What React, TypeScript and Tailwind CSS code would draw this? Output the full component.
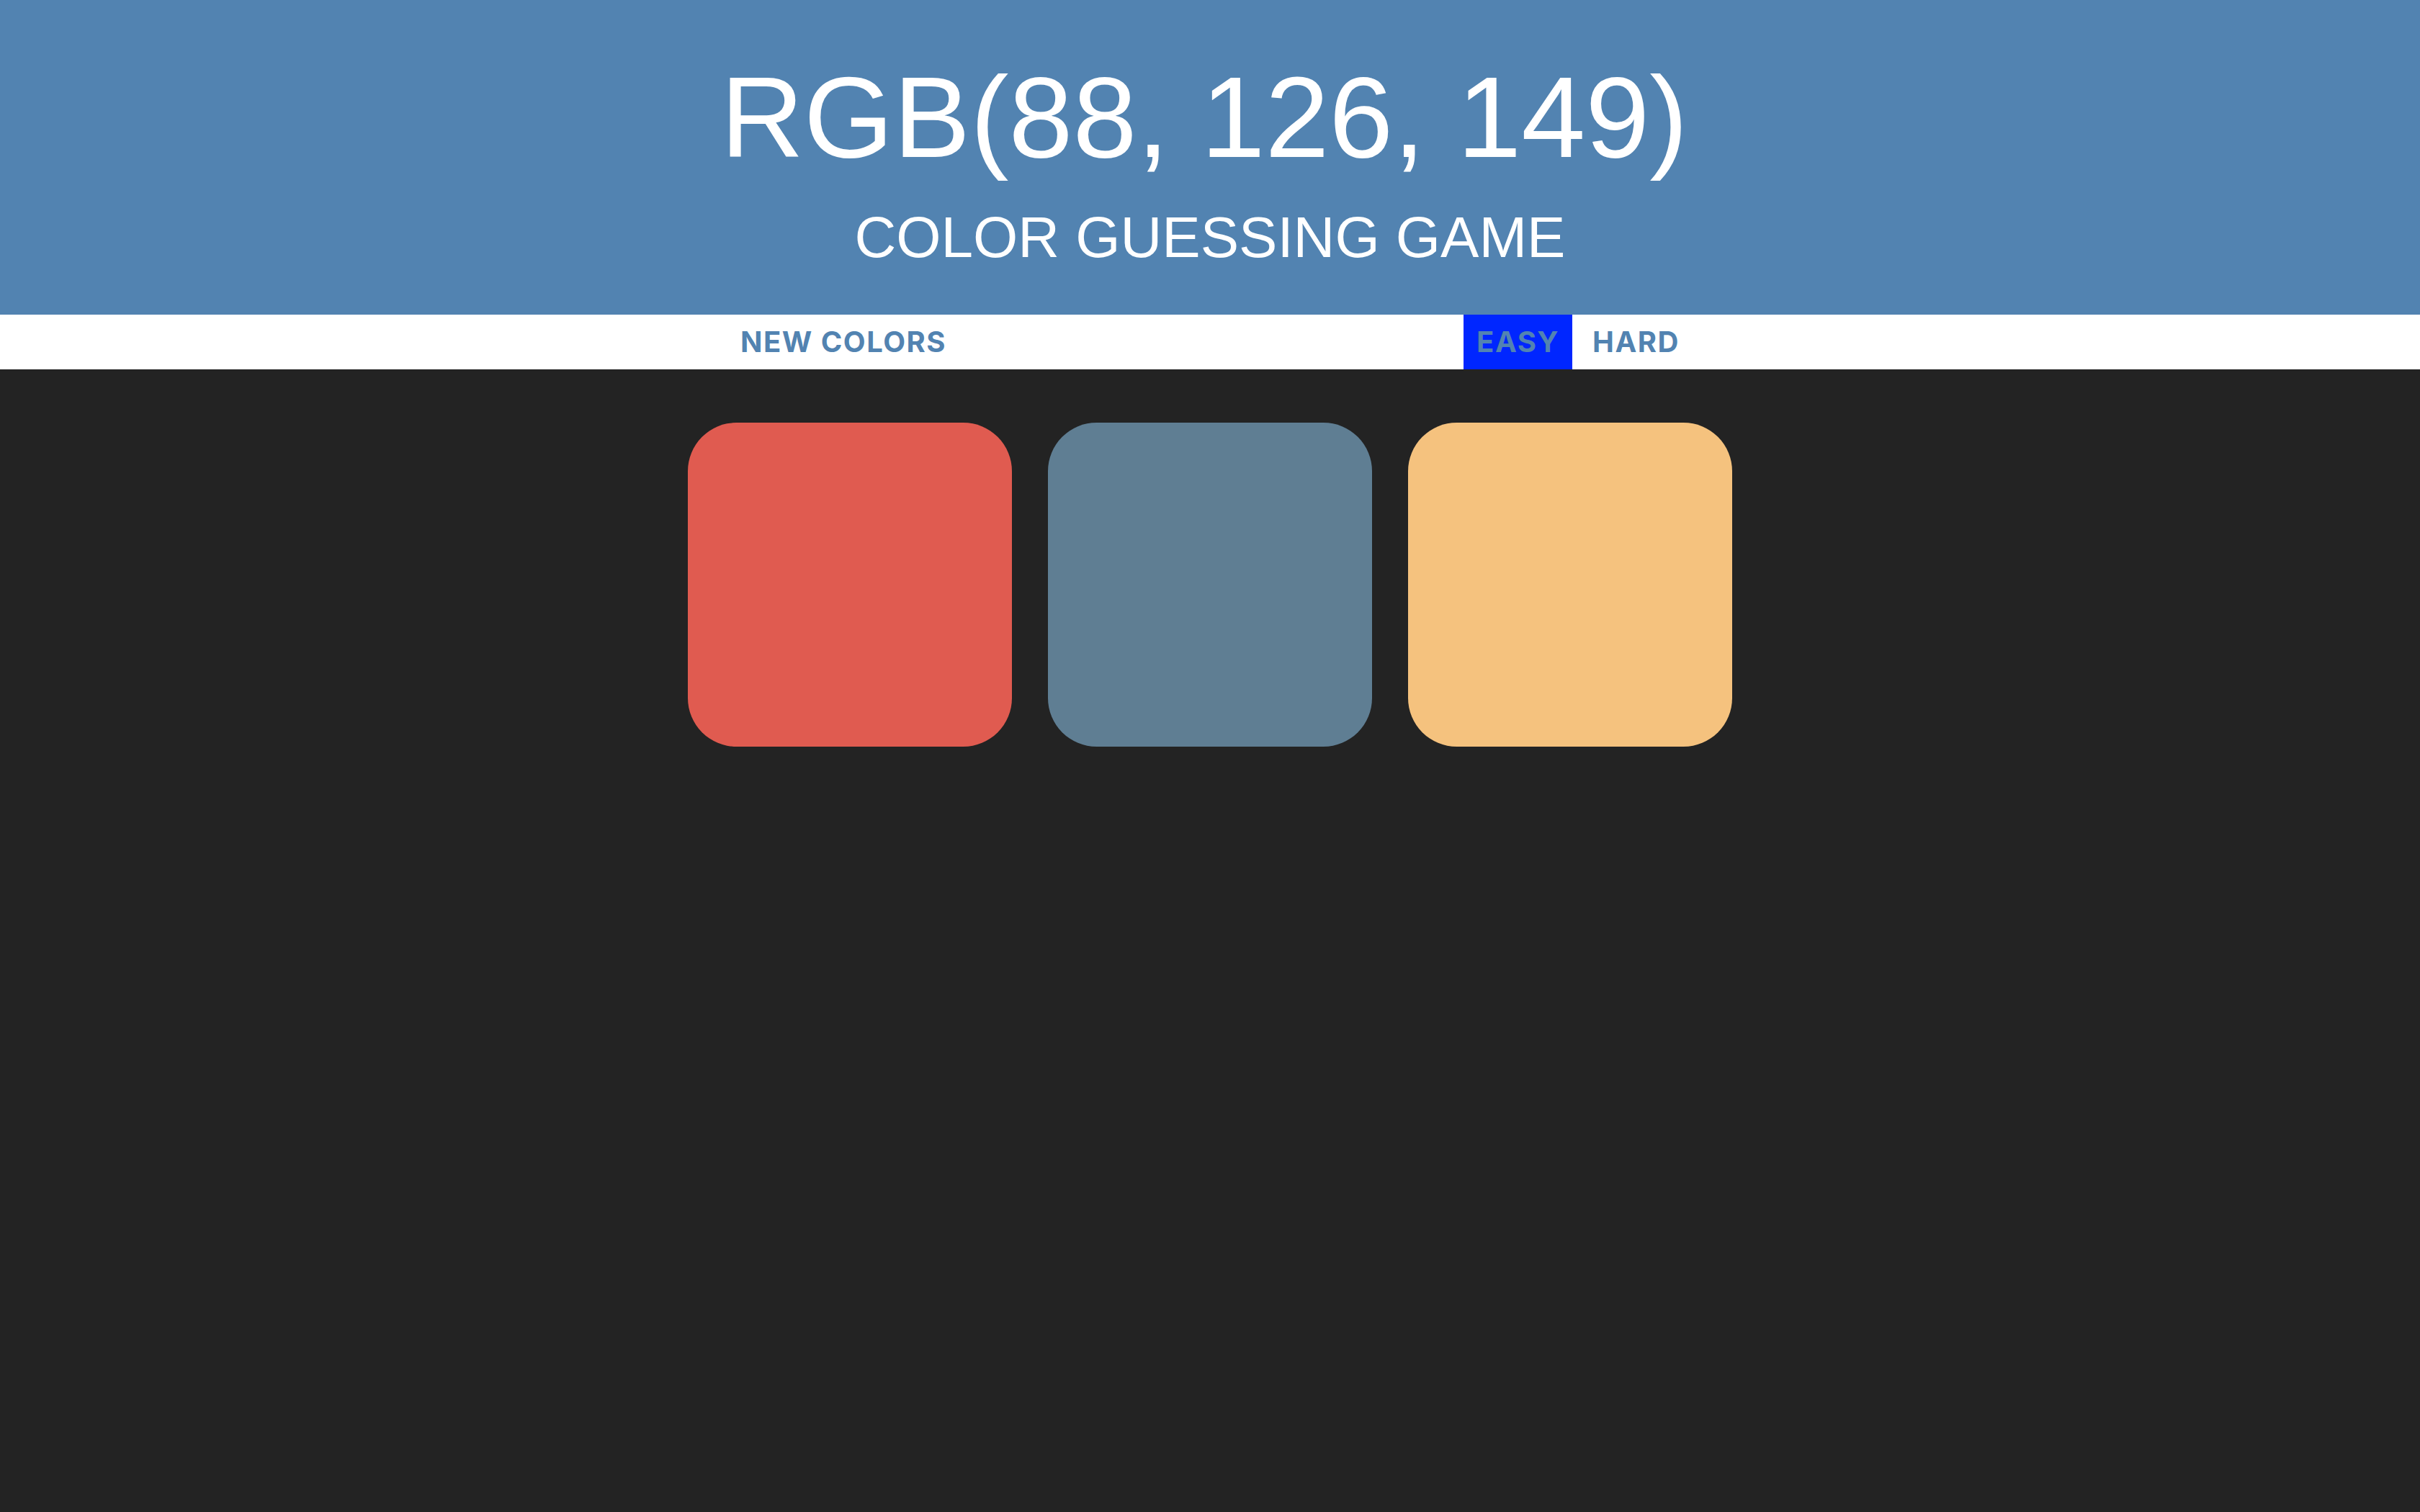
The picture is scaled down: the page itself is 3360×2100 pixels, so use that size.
const squares = ["#e05b50", "#5f7e93", "#f5c27e"];

function ModeButton({ label, active }: { label: string; active?: boolean }) {
  return (
    <button
      className={
        active
          ? "flex h-full items-center bg-[#0026ff] px-[18px] font-bold text-[#5283b1] text-[40px] uppercase tracking-[1.5px]"
          : "flex h-full items-center px-[18px] font-bold text-[#5283b1] text-[40px] uppercase tracking-[1.5px]"
      }
    >
      {label}
    </button>
  );
}

export default function App() {
  return (
    <div className="min-h-screen bg-[#232323]">
      <header className="bg-[#5283b1] pt-[83px] pb-[67px] text-center text-white font-['Liberation_Sans',Arial,sans-serif]">
        <h1 className="font-normal">
          <span className="block pr-[16px] text-[160px] leading-none">RGB(88, 126, 149)</span>
          <span className="mt-[47px] block text-[80px] leading-none">COLOR GUESSING GAME</span>
        </h1>
      </header>

      <nav className="flex h-[76px] justify-center bg-white font-['Inter',sans-serif]">
        <div className="flex w-[1340px] items-stretch justify-between">
          <ModeButton label="New Colors" />
          <div className="flex gap-[10px]">
            <ModeButton label="Easy" active />
            <ModeButton label="Hard" />
          </div>
        </div>
      </nav>

      <main className="mt-[74px] flex justify-center gap-[50px]">
        {squares.map((color) => (
          <div
            key={color}
            className="h-[450px] w-[450px] rounded-[15%]"
            style={{ backgroundColor: color }}
          />
        ))}
      </main>
    </div>
  );
}
